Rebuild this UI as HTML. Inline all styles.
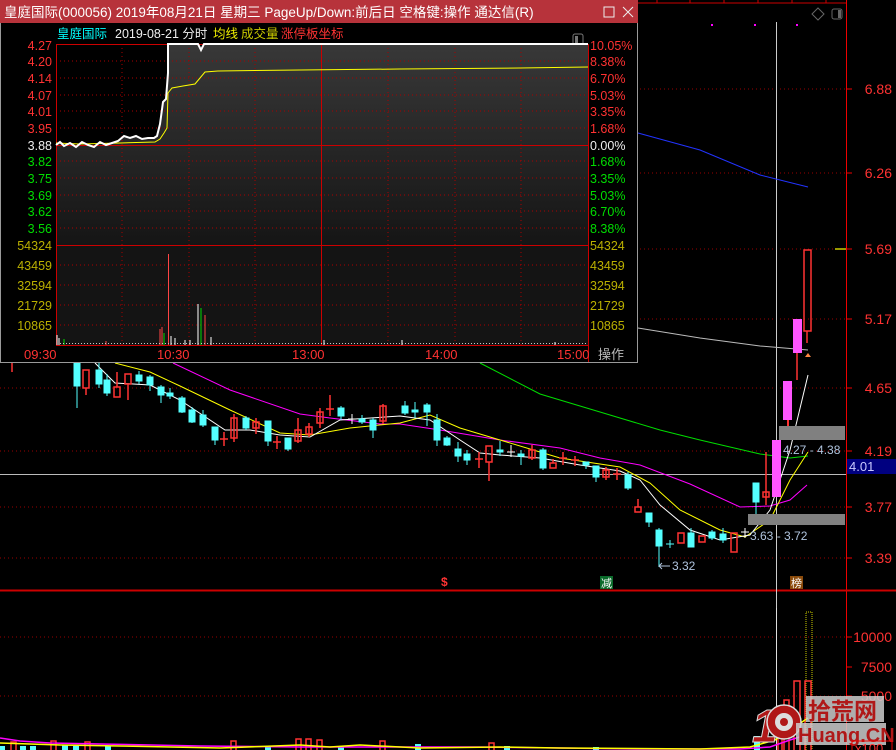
<!DOCTYPE html>
<html><head><meta charset="utf-8"><style>
html,body{margin:0;padding:0;background:#000;width:896px;height:750px;overflow:hidden}
svg{display:block}
text{font-family:"Liberation Sans","Noto Sans CJK SC",sans-serif}
</style></head><body>
<svg width="896" height="750" viewBox="0 0 896 750" xmlns="http://www.w3.org/2000/svg">
<defs>
<linearGradient id="g1" x1="0" y1="0" x2="0" y2="1"><stop offset="0" stop-color="#383838"/><stop offset="1" stop-color="#151515"/></linearGradient>
</defs>
<rect width="896" height="750" fill="#000"/>
<!-- top tick line -->
<line x1="0" y1="3" x2="846" y2="3" stroke="#c00" stroke-width="1"/>
<g stroke="#c00"><line x1="657" y1="0" x2="657" y2="3"/><line x1="690" y1="0" x2="690" y2="3"/><line x1="724" y1="0" x2="724" y2="3"/><line x1="758" y1="0" x2="758" y2="3"/><line x1="792" y1="0" x2="792" y2="3"/><line x1="826" y1="0" x2="826" y2="3"/></g>
<!-- right axis -->
<line x1="846.5" y1="0" x2="846.5" y2="750" stroke="#e00" stroke-width="1"/>
<line x1="0" y1="590.5" x2="896" y2="590.5" stroke="#c00" stroke-width="2"/>
<g stroke="#900" stroke-dasharray="1,3">
<line x1="0" y1="89" x2="846" y2="89"/><line x1="0" y1="173" x2="846" y2="173"/><line x1="0" y1="249" x2="846" y2="249"/><line x1="0" y1="319" x2="846" y2="319"/><line x1="0" y1="388" x2="846" y2="388"/><line x1="0" y1="451" x2="846" y2="451"/><line x1="0" y1="507" x2="846" y2="507"/><line x1="0" y1="558" x2="846" y2="558"/>
<line x1="0" y1="637" x2="846" y2="637"/><line x1="0" y1="696" x2="846" y2="696"/>
</g>
<g stroke="#e00"><line x1="846" y1="89" x2="852" y2="89"/><line x1="846" y1="173" x2="852" y2="173"/><line x1="846" y1="249" x2="852" y2="249"/><line x1="846" y1="319" x2="852" y2="319"/><line x1="846" y1="388" x2="852" y2="388"/><line x1="846" y1="451" x2="852" y2="451"/><line x1="846" y1="507" x2="852" y2="507"/><line x1="846" y1="558" x2="852" y2="558"/><line x1="846" y1="637" x2="852" y2="637"/><line x1="846" y1="667" x2="852" y2="667"/><line x1="846" y1="696" x2="852" y2="696"/></g>
<g fill="#ff3232" font-size="14" text-anchor="end">
<text x="892" y="94">6.88</text><text x="892" y="178">6.26</text><text x="892" y="254">5.69</text><text x="892" y="324">5.17</text><text x="892" y="393">4.65</text><text x="892" y="456">4.19</text><text x="892" y="512">3.77</text><text x="892" y="563">3.39</text>
<text x="892" y="642">10000</text><text x="892" y="672">7500</text><text x="892" y="701">5000</text>
</g>
<rect x="847" y="459" width="49" height="15" fill="#000080"/>
<text x="849" y="471" fill="#c8c8ff" font-size="13">4.01</text>
<line x1="0" y1="474.5" x2="846" y2="474.5" stroke="#bbb" stroke-width="1"/>
<line x1="776.5" y1="22" x2="776.5" y2="750" stroke="#ccc" stroke-width="1"/>
<!-- top icons -->
<path d="M818 8 L824 14 L818 20 L812 14Z" fill="none" stroke="#666"/>
<rect x="832" y="9" width="10" height="10" rx="2" fill="none" stroke="#666"/><rect x="838" y="10" width="3" height="8" fill="#666"/>
<g fill="#f0f"><rect x="711" y="24" width="2" height="2"/><rect x="754" y="24" width="2" height="2"/><rect x="796" y="24" width="2" height="2"/></g>
<line x1="835" y1="249" x2="846" y2="249" stroke="#cc0" stroke-width="1.5"/>
<!-- MA lines -->
<polyline fill="none" stroke="#bbb" points="638,328 700,338 760,346 808,350"/>
<polyline fill="none" stroke="#23f" points="638,133 700,150 760,175 808,187"/>
<polyline fill="none" stroke="#0d0" points="480,363 540,394 600,412 660,430 700,440 760,454 790,458 808,456"/>
<polyline fill="none" stroke="#f0f" points="173,363 230,390 300,414 330,418 380,424 400,424 440,430 500,440 560,448 600,458 640,465 690,484 740,507 770,506 790,500 807,485"/>
<polyline fill="none" stroke="#ff0" points="115,363 150,372 180,386 230,410 280,433 310,435 350,428 400,423 430,415 460,428 500,440 560,458 620,467 650,483 680,510 720,530 745,537 770,520 790,480 808,452"/>
<polyline fill="none" stroke="#fff" points="95,363 115,383 150,385 180,400 225,430 250,430 280,435 310,437 340,420 400,416 430,420 460,440 480,453 500,455 540,458 580,465 620,471 640,480 660,505 690,530 720,540 750,535 770,510 790,450 808,375"/>
<!-- candles -->
<g fill="#54ffff" stroke="#54ffff">
<line x1="77" y1="363" x2="77" y2="408"/><rect x="74" y="363" width="6" height="23"/>
<line x1="99" y1="363" x2="99" y2="388"/><rect x="96" y="370" width="6" height="14"/>
<line x1="107" y1="374" x2="107" y2="396"/><rect x="104" y="380" width="6" height="13"/>
<line x1="139" y1="371" x2="139" y2="384"/><rect x="136" y="375" width="6" height="6"/>
<line x1="150" y1="375" x2="150" y2="391"/><rect x="147" y="377" width="6" height="8"/>
<line x1="161" y1="385" x2="161" y2="403"/><rect x="158" y="387" width="6" height="8"/>
<line x1="170" y1="388" x2="170" y2="399"/><rect x="167" y="393" width="6" height="3"/>
<line x1="182" y1="396" x2="182" y2="413"/><rect x="179" y="398" width="6" height="14"/>
<line x1="192" y1="407" x2="192" y2="423"/><rect x="189" y="410" width="6" height="12"/>
<line x1="203" y1="410" x2="203" y2="427"/><rect x="200" y="415" width="6" height="10"/>
<line x1="215" y1="427" x2="215" y2="445"/><rect x="212" y="427" width="6" height="13"/>
<line x1="246" y1="416" x2="246" y2="430"/><rect x="243" y="418" width="6" height="10"/>
<line x1="268" y1="421" x2="268" y2="446"/><rect x="265" y="421" width="6" height="20"/>
<line x1="288" y1="438" x2="288" y2="451"/><rect x="285" y="438" width="6" height="11"/>
<line x1="341" y1="406" x2="341" y2="420"/><rect x="338" y="408" width="6" height="8"/>
<line x1="362" y1="415" x2="362" y2="424"/><rect x="359" y="419" width="6" height="3"/>
<line x1="373" y1="418" x2="373" y2="438"/><rect x="370" y="420" width="6" height="10"/>
<line x1="405" y1="401" x2="405" y2="415"/><rect x="402" y="406" width="6" height="7"/>
<line x1="415" y1="402" x2="415" y2="418"/><rect x="412" y="410" width="6" height="2"/>
<line x1="427" y1="403" x2="427" y2="426"/><rect x="424" y="405" width="6" height="7"/>
<line x1="437" y1="414" x2="437" y2="446"/><rect x="434" y="420" width="6" height="20"/>
<line x1="447" y1="436" x2="447" y2="446"/><rect x="444" y="438" width="6" height="7"/>
<line x1="458" y1="442" x2="458" y2="462"/><rect x="455" y="449" width="6" height="7"/>
<line x1="467" y1="450" x2="467" y2="465"/><rect x="464" y="454" width="6" height="6"/>
<line x1="500" y1="441" x2="500" y2="456"/><rect x="497" y="450" width="6" height="2"/>
<line x1="521" y1="450" x2="521" y2="465"/><rect x="518" y="454" width="6" height="2"/>
<line x1="543" y1="448" x2="543" y2="470"/><rect x="540" y="450" width="6" height="18"/>
<line x1="586" y1="462" x2="586" y2="469"/><rect x="583" y="462" width="6" height="3"/>
<line x1="596" y1="466" x2="596" y2="482"/><rect x="593" y="466" width="6" height="11"/>
<line x1="628" y1="472" x2="628" y2="490"/><rect x="625" y="475" width="6" height="13"/>
<line x1="649" y1="513" x2="649" y2="527"/><rect x="646" y="513" width="6" height="9"/>
<line x1="659" y1="528" x2="659" y2="567"/><rect x="656" y="530" width="6" height="16"/>
<line x1="670" y1="540" x2="670" y2="548"/><line x1="666" y1="544" x2="674" y2="544"/>
<line x1="691" y1="528" x2="691" y2="547"/><rect x="688" y="533" width="6" height="14"/>
<line x1="712" y1="530" x2="712" y2="540"/><rect x="709" y="532" width="6" height="6"/>
<line x1="723" y1="528" x2="723" y2="543"/><rect x="720" y="534" width="6" height="6"/>
<line x1="756" y1="483" x2="756" y2="514"/><rect x="753" y="483" width="6" height="19"/>
</g>
<g fill="none" stroke="#ff3232" stroke-width="1.5">
<line x1="12" y1="363" x2="12" y2="372"/>
<rect x="83" y="370" width="6" height="18"/><line x1="86" y1="388" x2="86" y2="395"/>
<rect x="114" y="387" width="6" height="10"/><line x1="117" y1="372" x2="117" y2="387"/>
<rect x="125" y="374" width="6" height="10"/><line x1="128" y1="384" x2="128" y2="400"/>
<line x1="224" y1="432" x2="224" y2="446"/><line x1="220" y1="439" x2="228" y2="439"/>
<rect x="231" y="418" width="6" height="20"/><line x1="234" y1="414" x2="234" y2="442"/>
<rect x="253" y="422" width="6" height="6"/><line x1="256" y1="418" x2="256" y2="434"/>
<line x1="277" y1="436" x2="277" y2="449"/><line x1="273" y1="442" x2="281" y2="442"/>
<rect x="295" y="430" width="6" height="11"/><line x1="298" y1="418" x2="298" y2="443"/>
<rect x="306" y="427" width="6" height="7"/><line x1="309" y1="423" x2="309" y2="437"/>
<rect x="317" y="412" width="6" height="11"/><line x1="320" y1="408" x2="320" y2="428"/>
<line x1="330" y1="395" x2="330" y2="416"/><line x1="326" y1="409" x2="334" y2="409"/>
<rect x="380" y="406" width="6" height="15"/><line x1="383" y1="404" x2="383" y2="424"/>
<line x1="479" y1="452" x2="479" y2="468"/><line x1="475" y1="459" x2="483" y2="459"/>
<rect x="486" y="446" width="6" height="16"/><line x1="489" y1="462" x2="489" y2="481"/>
<rect x="529" y="450" width="6" height="8"/><line x1="532" y1="445" x2="532" y2="460"/>
<rect x="550" y="463" width="6" height="5"/><line x1="553" y1="459" x2="553" y2="463"/>
<line x1="563" y1="452" x2="563" y2="465"/><line x1="559" y1="458" x2="567" y2="458"/>
<line x1="575" y1="456" x2="575" y2="466"/><line x1="571" y1="460" x2="579" y2="460"/>
<rect x="603" y="470" width="6" height="7"/><line x1="606" y1="467" x2="606" y2="480"/>
<line x1="617" y1="468" x2="617" y2="480"/><line x1="613" y1="474" x2="621" y2="474"/>
<rect x="635" y="507" width="6" height="5"/><line x1="638" y1="499" x2="638" y2="507"/>
<rect x="678" y="533" width="6" height="10"/>
<rect x="699" y="536" width="6" height="6"/>
<rect x="731" y="533" width="6" height="19"/>
<rect x="763" y="492" width="6" height="5"/><line x1="766" y1="452" x2="766" y2="505"/>
<rect x="804" y="250" width="7" height="81"/><line x1="807" y1="331" x2="807" y2="343"/>
<line x1="797" y1="352" x2="797" y2="380"/>
</g>
<g fill="#fff" stroke="#fff"><line x1="352" y1="414" x2="352" y2="424"/><line x1="348" y1="419" x2="356" y2="419"/><line x1="511" y1="445" x2="511" y2="457"/><line x1="507" y1="452" x2="515" y2="452"/><line x1="745" y1="528" x2="745" y2="538"/><line x1="741" y1="532" x2="749" y2="532"/></g>
<g fill="#ff55ff"><rect x="772" y="440" width="9" height="57"/><rect x="783" y="381" width="9" height="39"/><rect x="793" y="319" width="9" height="34"/></g>
<line x1="788" y1="420" x2="788" y2="428" stroke="#ff3232" stroke-width="2"/>
<path d="M805 357 L808 353 L811 357Z" fill="#f84"/>
<rect x="748" y="514" width="97" height="11" fill="#808080"/>
<rect x="779" y="426" width="66" height="14" fill="#808080"/>
<g fill="#b0c4de" font-size="12"><text x="783" y="454">4.27 - 4.38</text><text x="750" y="540">3.63 - 3.72</text><text x="672" y="570">3.32</text></g>
<path d="M670 566 L659 566 M662 563 L659 566 L662 569" stroke="#b0c4de" fill="none"/>
<text x="441" y="586" fill="#f33" font-size="12" font-weight="bold">$</text>
<rect x="600" y="576" width="13" height="13" fill="#0a6a2a"/><text x="601" y="587" fill="#fff" font-size="11">减</text>
<rect x="790" y="576" width="13" height="13" fill="#8a4a0a"/><text x="791" y="587" fill="#fff" font-size="11">榜</text>
<!-- volume -->
<line x1="776.5" y1="608" x2="776.5" y2="750" stroke="#ddd"/>
<rect x="806" y="612" width="6" height="140" fill="none" stroke="#cc0" stroke-dasharray="1,1"/>
<g fill="none" stroke="#ff3232" stroke-width="1.5">
<rect x="794" y="681" width="6" height="72"/><rect x="805" y="681" width="6" height="72"/>
<rect x="784" y="700" width="5" height="52"/><rect x="778" y="716" width="4" height="36"/>
<rect x="11" y="742" width="5" height="10"/><rect x="51" y="741" width="5" height="10"/><rect x="85" y="742" width="5" height="10"/><rect x="231" y="741" width="5" height="10"/><rect x="296" y="739" width="5" height="12"/><rect x="306" y="739" width="5" height="12"/><rect x="317" y="740" width="5" height="12"/><rect x="380" y="741" width="5" height="10"/><rect x="489" y="743" width="5" height="10"/>
</g>
<g fill="#54ffff"><rect x="0" y="746" width="5" height="4"/><rect x="20" y="746" width="6" height="4"/><rect x="30" y="746" width="6" height="4"/><rect x="62" y="745" width="6" height="5"/><rect x="73" y="746" width="6" height="4"/><rect x="105" y="746" width="6" height="4"/><rect x="265" y="746" width="6" height="4"/><rect x="338" y="746" width="6" height="4"/><rect x="415" y="744" width="6" height="6"/><rect x="504" y="746" width="6" height="4"/><rect x="593" y="747" width="6" height="3"/><rect x="754" y="736" width="6" height="14"/></g>
<polyline fill="none" stroke="#f0f" stroke-width="1.5" points="0,738 20,741 50,743 100,744 200,746 300,747 480,747 560,748 640,749 740,749 770,747 790,740 806,735"/>
<polyline fill="none" stroke="#ff0" stroke-width="1.5" points="0,743 30,744 60,745 120,746 220,748 300,745 330,747 360,745 420,748 500,747 560,748 700,749 750,747 775,740 790,730 808,718"/>
<!-- watermark -->
<g>
<text x="752" y="742" fill="#b01818" stroke="#ddd" stroke-width="1" font-size="46" font-weight="bold" font-style="italic">1</text>
<circle cx="784" cy="722" r="17" fill="#b01818" stroke="#ddd" stroke-width="1.5"/>
<circle cx="784" cy="722" r="9" fill="#ddd"/><circle cx="784" cy="722" r="4" fill="#b01818"/>
<rect x="806" y="696" width="78" height="26" fill="#ccc" opacity="0.85"/>
<text x="808" y="719" fill="#b01818" font-size="23" font-weight="bold">拾荒网</text>
<rect x="796" y="723" width="90" height="22" fill="#ccc" opacity="0.85"/>
<text x="798" y="742" fill="#b01818" font-size="20" font-weight="bold">Huang.CN</text>
</g>
<rect x="852" y="741" width="40" height="14" fill="none" stroke="#e00"/>
<text x="855" y="753" fill="#ff3232" font-size="13">x100</text>

<!-- popup window -->
<rect x="0" y="0" width="638" height="363" fill="#000"/>
<rect x="0.5" y="0.5" width="637" height="362" fill="none" stroke="#9a9a9a"/>
<rect x="0" y="0" width="638" height="23" fill="#b7333b"/>
<text x="4" y="17" fill="#fff" font-size="13.5">皇庭国际(000056) 2019年08月21日 星期三 PageUp/Down:前后日 空格键:操作 通达信(R)</text>
<rect x="604" y="7" width="10" height="10" fill="none" stroke="#eee"/>
<path d="M623 7 L633 17 M633 7 L623 17" stroke="#eee"/>
<text x="57" y="38" fill="#0ff" font-size="12.5">皇庭国际</text>
<text x="115" y="38" fill="#eee" font-size="12.5">2019-08-21 分时</text>
<text x="213" y="38" fill="#ee0" font-size="12.5">均线</text>
<text x="241" y="38" fill="#cc0" font-size="12.5">成交量</text>
<text x="281" y="38" fill="#f33" font-size="12.5">涨停板坐标</text>
<rect x="573" y="34" width="10" height="11" rx="2" fill="none" stroke="#777"/><rect x="575" y="36" width="3" height="7" fill="#777"/>
<polygon fill="url(#g1)" points="56,145 60,142 64,146 70,143 76,147 82,142 88,145 94,147 100,142 106,145 112,143 118,141 124,136 130,138 136,136 142,139 148,138 154,138 157,136 160,124 163,102 166,99 168,73 168,44 198,44 201,50 204,44 588,44 588,245 56,245"/>
<rect x="56" y="245" width="532" height="100" fill="#141414"/>
<g stroke="#a00" stroke-dasharray="1,3">
<line x1="56" y1="61" x2="588" y2="61"/><line x1="56" y1="78" x2="588" y2="78"/><line x1="56" y1="95" x2="588" y2="95"/><line x1="56" y1="111" x2="588" y2="111"/><line x1="56" y1="128" x2="588" y2="128"/><line x1="56" y1="161" x2="588" y2="161"/><line x1="56" y1="178" x2="588" y2="178"/><line x1="56" y1="195" x2="588" y2="195"/><line x1="56" y1="211" x2="588" y2="211"/><line x1="56" y1="228" x2="588" y2="228"/>
<line x1="56" y1="265" x2="588" y2="265"/><line x1="56" y1="285" x2="588" y2="285"/><line x1="56" y1="305" x2="588" y2="305"/><line x1="56" y1="325" x2="588" y2="325"/>
<line x1="122" y1="44" x2="122" y2="345"/><line x1="189" y1="44" x2="189" y2="345"/><line x1="255" y1="44" x2="255" y2="345"/><line x1="388" y1="44" x2="388" y2="345"/><line x1="455" y1="44" x2="455" y2="345"/><line x1="521" y1="44" x2="521" y2="345"/>
</g>
<g stroke="#c00" fill="none"><rect x="56.5" y="44.5" width="532" height="301"/><line x1="56" y1="145.5" x2="588" y2="145.5"/><line x1="56" y1="245.5" x2="588" y2="245.5"/><line x1="321.5" y1="44" x2="321.5" y2="345"/></g>
<polyline fill="none" stroke="#ff0" points="56,143 80,144 120,143 155,142 160,139 164,133 167,128 168,93 172,88 183,86 195,84 200,78 205,72 218,71 300,70 400,69 520,68 588,67"/>
<polyline fill="none" stroke="#fff" stroke-width="2" points="56,145 60,142 64,146 70,143 76,147 82,142 88,145 94,147 100,142 106,145 112,143 118,141 124,136 130,138 136,136 142,139 148,138 154,138 157,136 160,124 163,102 166,99 168,73 168,44 198,44 201,50 204,44 588,44"/>
<!-- popup volume bars -->
<g stroke="#fff"><line x1="57" y1="345" x2="57" y2="335"/><line x1="59" y1="345" x2="59" y2="338"/><line x1="171" y1="345" x2="171" y2="336"/><line x1="175" y1="345" x2="175" y2="338"/><line x1="198" y1="345" x2="198" y2="304"/><line x1="211" y1="345" x2="211" y2="337"/><line x1="185" y1="345" x2="185" y2="340"/><line x1="190" y1="345" x2="190" y2="340"/><line x1="324" y1="345" x2="324" y2="340"/><line x1="402" y1="345" x2="402" y2="340"/><line x1="555" y1="345" x2="555" y2="342"/></g>
<g stroke="#f44"><line x1="168.5" y1="345" x2="168.5" y2="254"/><line x1="160" y1="345" x2="160" y2="329"/><line x1="162" y1="345" x2="162" y2="327"/><line x1="205" y1="345" x2="205" y2="315"/><line x1="106" y1="345" x2="106" y2="341"/></g>
<g stroke="#0d0"><line x1="201" y1="345" x2="201" y2="308"/><line x1="64" y1="345" x2="64" y2="339"/><line x1="164" y1="345" x2="164" y2="333"/></g>
<line x1="60" y1="343.5" x2="586" y2="343.5" stroke="#ccc" stroke-dasharray="1,2"/>
<g font-size="12.5" text-anchor="end">
<g fill="#ff3232"><text x="52" y="50">4.27</text><text x="52" y="66">4.20</text><text x="52" y="83">4.14</text><text x="52" y="100">4.07</text><text x="52" y="116">4.01</text><text x="52" y="133">3.95</text></g>
<text x="52" y="150" fill="#eee">3.88</text>
<g fill="#0d0"><text x="52" y="166">3.82</text><text x="52" y="183">3.75</text><text x="52" y="200">3.69</text><text x="52" y="216">3.62</text><text x="52" y="233">3.56</text></g>
<g fill="#bbb000"><text x="52" y="250">54324</text><text x="52" y="270">43459</text><text x="52" y="290">32594</text><text x="52" y="310">21729</text><text x="52" y="330">10865</text></g>
</g>
<g font-size="12.5">
<g fill="#ff3232"><text x="590" y="50">10.05%</text><text x="590" y="66">8.38%</text><text x="590" y="83">6.70%</text><text x="590" y="100">5.03%</text><text x="590" y="116">3.35%</text><text x="590" y="133">1.68%</text></g>
<text x="590" y="150" fill="#eee">0.00%</text>
<g fill="#0d0"><text x="590" y="166">1.68%</text><text x="590" y="183">3.35%</text><text x="590" y="200">5.03%</text><text x="590" y="216">6.70%</text><text x="590" y="233">8.38%</text></g>
<g fill="#bbb000"><text x="590" y="250">54324</text><text x="590" y="270">43459</text><text x="590" y="290">32594</text><text x="590" y="310">21729</text><text x="590" y="330">10865</text></g>
</g>
<line x1="588.5" y1="345" x2="588.5" y2="362" stroke="#c00"/>
<g fill="#ff3232" font-size="13"><text x="24" y="359">09:30</text><text x="157" y="359">10:30</text><text x="292" y="359">13:00</text><text x="425" y="359">14:00</text><text x="557" y="359">15:00</text></g>
<text x="598" y="359" fill="#bbb" font-size="13">操作</text>
</svg>
</body></html>
